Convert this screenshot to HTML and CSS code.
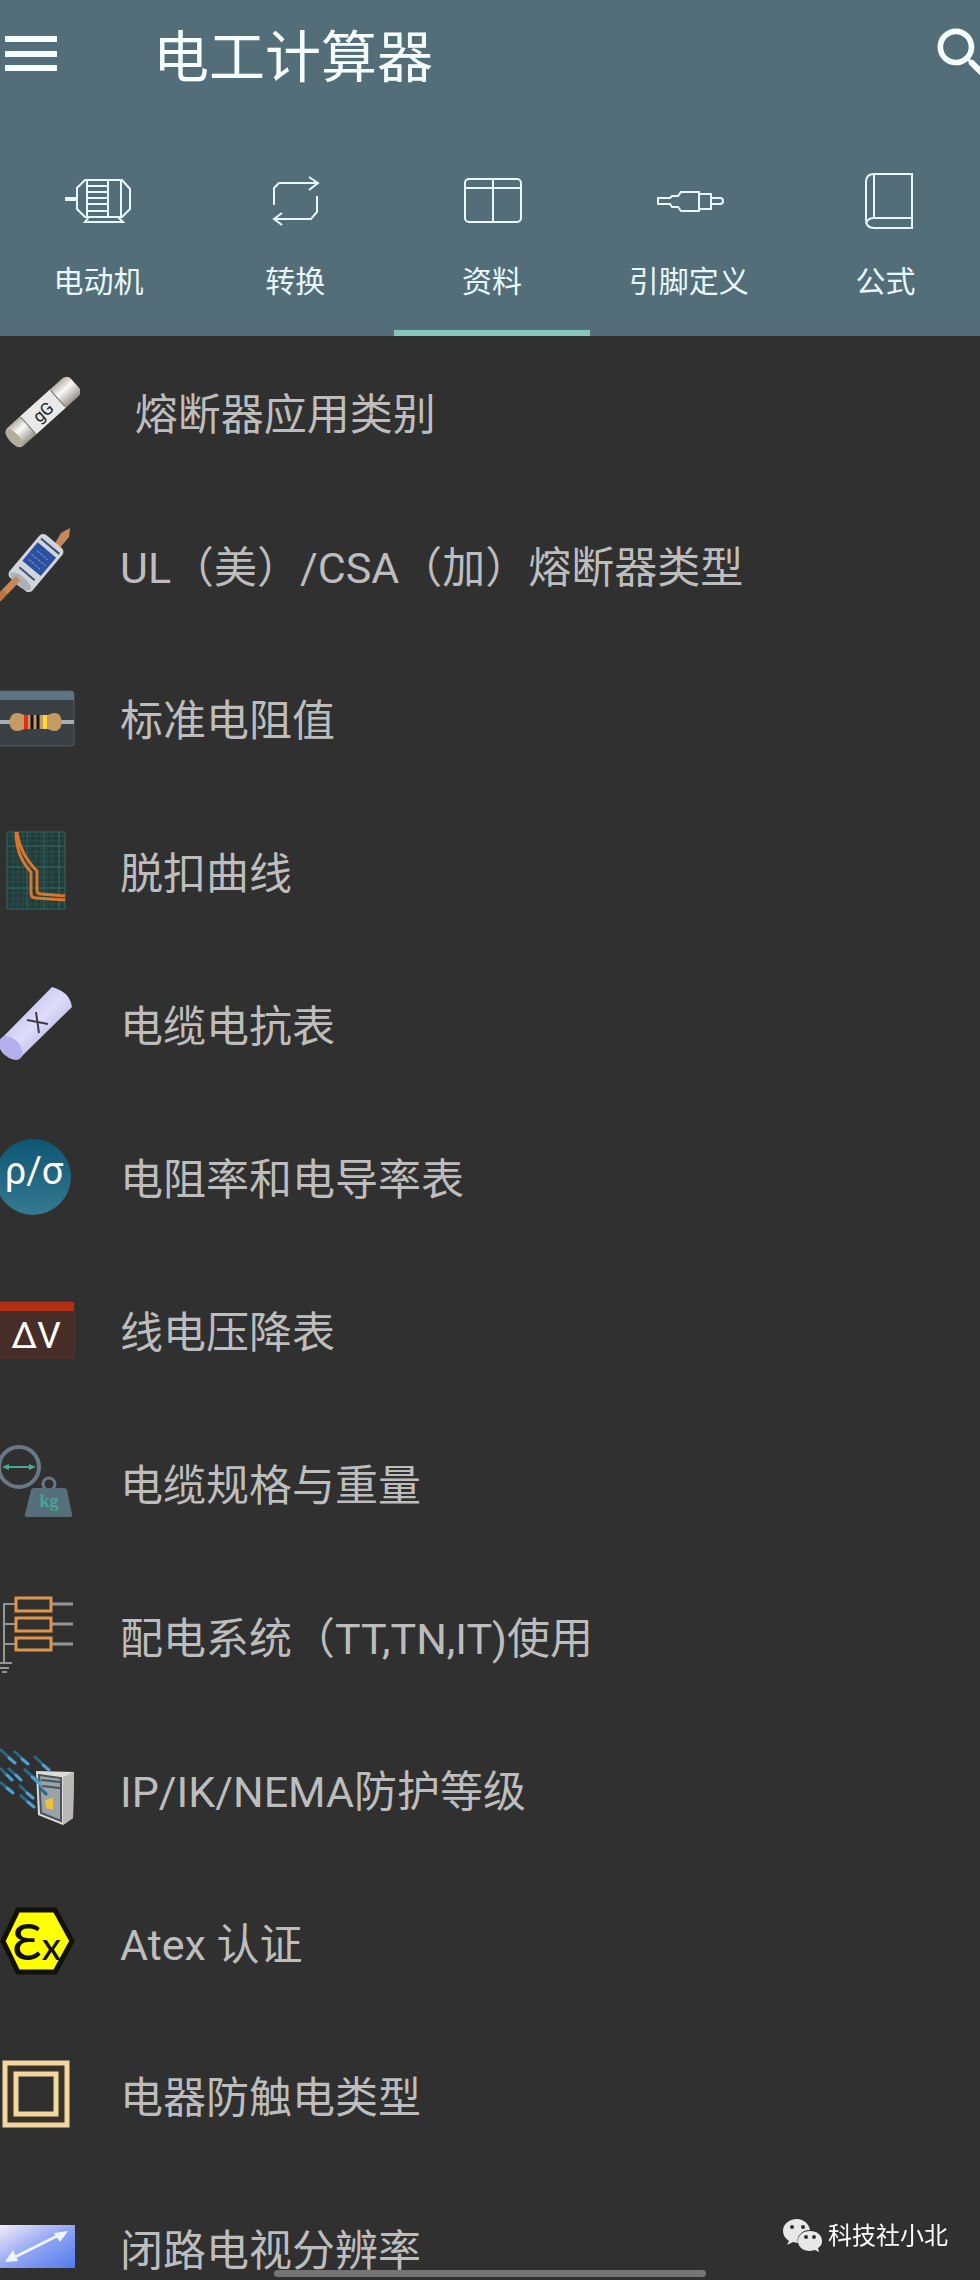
FILE: index.html
```
<!DOCTYPE html>
<html lang="zh-CN">
<head>
  <meta charset="UTF-8" />
  <meta name="viewport" content="width=device-width, initial-scale=1.0"/>
  <title>电工计算器</title>
  <link rel="stylesheet" href="styles.css">
</head>
<body>

<header class="header">
  <div class="topbar">
    <button class="menu-btn" aria-label="菜单">
      <svg width="52" height="36" viewBox="0 0 52 36" fill="currentColor"><path d="M0 0h52v6H0zM0 15h52v6H0zM0 29h52v6H0z"/></svg>
    </button>
    <h1>电工计算器</h1>
    <button class="search-btn" aria-label="搜索">
      <svg width="68" height="68" viewBox="0 0 24 24" fill="currentColor"><path d="M15.5 14h-.79l-.28-.27C15.41 12.59 16 11.11 16 9.5 16 5.91 13.09 3 9.5 3S3 5.91 3 9.5 5.91 16 9.5 16c1.61 0 3.09-.59 4.23-1.57l.27.28v.79l5 4.99L20.49 19l-4.99-5zm-6 0C7.01 14 5 11.99 5 9.5S7.01 5 9.5 5 14 7.01 14 9.5 11.99 14 9.5 14z"/></svg>
    </button>
  </div>
  <nav class="tabs">
    <button class="tab">
      <svg class="tab-icon" viewBox="0 0 72 60"><path d="M3 29h11" stroke-width="4"/><path d="M23 10h37l8 9v20l-8 8H23l-8-8V18zM25 10v37M46 10v37M59 10v37M25 16h21M25 22h21M25 28h21M25 34h21M25 41h21M27 47l-4 5h38l-5-5"/></svg>
      <span>电动机</span>
    </button>
    <button class="tab">
      <svg class="tab-icon" viewBox="0 0 72 60"><path d="M15 35V18l5-5h39M50 7l9 6-9 7M58 26v16l-6 7H15M23 43l-8 6 8 6"/></svg>
      <span>转换</span>
    </button>
    <button class="tab active">
      <svg class="tab-icon" viewBox="0 0 72 60"><rect x="9" y="9" width="56" height="43" rx="4"/><path d="M9 18h56M37 9v43"/></svg>
      <span>资料</span>
    </button>
    <button class="tab">
      <svg class="tab-icon" viewBox="0 0 72 60"><path d="M5 28h12l2-2h6l3-4h18v19H28l-3-4h-6l-2-3H5zM46 24h12v15H46M58 28h9a3 3 0 0 1 0 6h-9"/></svg>
      <span>引脚定义</span>
    </button>
    <button class="tab">
      <svg class="tab-icon" viewBox="0 0 72 60"><path d="M62 48V4H24q-8 0-8 8v38q0 8 8 8h38V48H24q-7 0-8 6M24 4v44"/></svg>
      <span>公式</span>
    </button>
  </nav>
</header>

<main class="list">
  <a class="item" href="#">
    <svg class="icon" viewBox="0 0 80 91">
      <defs><linearGradient id="fuse" x1="0" y1="0" x2="0" y2="1"><stop offset="0" stop-color="#b5b0a8"/><stop offset=".4" stop-color="#fafafa"/><stop offset="1" stop-color="#99948b"/></linearGradient></defs>
      <g transform="translate(43 43) rotate(-42)">
        <rect x="-43" y="-12" width="86" height="24" rx="6" fill="url(#fuse)"/>
        <rect x="-20" y="-12" width="40" height="24" fill="#e9e9e9"/>
        <path d="M-20-11v22M20-11v22" stroke="#77736c"/>
        <ellipse cx="-39" cy="0" rx="5" ry="11" fill="#b3ada0"/>
        <text x="0" y="6" text-anchor="middle" font-size="17" fill="#222">gG</text>
      </g>
    </svg>
    <span>&#8196;熔断器应用类别</span>
  </a>
  <a class="item" href="#">
    <svg class="icon" viewBox="0 0 80 91">
      <path d="M-2 77L20 54" stroke="#b87543" stroke-width="7"/>
      <path d="M54 23l7-12 9-5-1 9-11 13z" fill="#c58a5c"/>
      <g transform="translate(36 41) rotate(-50)">
        <rect x="-28" y="-15" width="56" height="30" rx="5" fill="#d3d5dc"/>
        <ellipse cx="-24" cy="0" rx="5" ry="13" fill="#aeb0b8"/>
        <rect x="-7" y="-12" width="24" height="24" fill="#2b509f"/>
        <path d="M22-12v24M-14-10v20" stroke="#385276" stroke-width="2"/>
        <path d="M-2-8v16M4-9v18M10-7v14" stroke="#7897cb" stroke-dasharray="3 1"/>
      </g>
      <path d="M5 70l13-14" stroke="#c98956" stroke-width="6"/>
    </svg>
    <span>UL（美）/CSA（加）熔断器类型</span>
  </a>
  <a class="item" href="#">
    <svg class="icon" viewBox="0 0 80 91">
      <rect x="-4" y="16" width="78" height="55" rx="3" fill="#3b4044" stroke="#4c5a62"/>
      <path d="M0 16h71q3 0 3 3v6H0z" fill="#5e7482"/>
      <path d="M0 47h74" stroke="#a9adb3" stroke-width="4"/>
      <path d="M17 38q4 0 7 2h24q3-2 7-2c9 0 9 18 0 18q-4 0-7-2H24q-3 2-7 2c-10 0-10-18 0-18z" fill="#c69a63"/>
      <path d="M26 40v14" stroke="#e82d16" stroke-width="4"/>
      <path d="M32 40v14M38 40v14" stroke="#15100c" stroke-width="3"/>
      <path d="M45 40v14" stroke="#fbd936" stroke-width="4"/>
    </svg>
    <span>标准电阻值</span>
  </a>
  <a class="item" href="#">
    <svg class="icon" viewBox="0 0 80 91">
      <rect x="7" y="4" width="58" height="77" fill="#233b3b"/>
      <path d="M7 8h58M7 13h58M7 18h58M7 24h58M7 28h58M7 33h58M7 39h58M7 44h58M7 49h58M7 54h58M7 60h58M7 65h58M7 71h58M7 76h58M13 4v77M18 4v77M23 4v77M30 4v77M36 4v77M41 4v77M47 4v77M52 4v77M59 4v77" stroke="#294f4b"/>
      <path d="M7 4h58v77H7zM7 18h58M7 39h58M7 60h58M27 4v77M44 4v77M59 4v77" fill="none" stroke="#34665f"/>
      <path d="M16 4q0 24 15 40v21q0 5 5 5l29 2M17 4q3 22 20 39v19q0 4 4 4l24 2" fill="none" stroke="#d8762c" stroke-width="3"/>
    </svg>
    <span>脱扣曲线</span>
  </a>
  <a class="item" href="#">
    <svg class="icon" viewBox="0 0 80 91">
      <defs><linearGradient id="tube" x1="0" y1="0" x2="1" y2="1"><stop offset="0" stop-color="#aaa7d8"/><stop offset=".5" stop-color="#dfddfb"/><stop offset="1" stop-color="#9b96ce"/></linearGradient></defs>
      <path d="M52 6q18 5 20 20L22 75q-5 5-11 2Q-3 72 0 59z" fill="url(#tube)"/>
      <ellipse cx="11" cy="67" rx="9" ry="14" transform="rotate(-43 11 67)" fill="#b5b0ec"/>
      <path d="M27 39l21 4M36 31l3 21" stroke="#3d3b48" stroke-width="2"/>
    </svg>
    <span>电缆电抗表</span>
  </a>
  <a class="item" href="#">
    <svg class="icon" viewBox="0 0 80 91">
      <defs><linearGradient id="disc" x1="0" y1="0" x2="0" y2="1"><stop offset="0" stop-color="#0d5672"/><stop offset="1" stop-color="#367992"/></linearGradient></defs>
      <circle cx="33" cy="43" r="38" fill="url(#disc)"/>
      <text x="34" y="50" text-anchor="middle" font-size="38" fill="#fff">ρ/σ</text>
    </svg>
    <span>电阻率和电导率表</span>
  </a>
  <a class="item" href="#">
    <svg class="icon" viewBox="0 0 80 91">
      <rect x="-4" y="15" width="78" height="56" rx="2" fill="#472d28" stroke="#6b2f23"/>
      <path d="M0 15h72q2 0 2 2v7H0z" fill="#b12f13"/>
      <text x="36" y="61" text-anchor="middle" font-size="37" fill="#fff">ΔV</text>
    </svg>
    <span>线电压降表</span>
  </a>
  <a class="item" href="#">
    <svg class="icon" viewBox="0 0 80 91">
      <circle cx="19" cy="27" r="20" fill="none" stroke="#697984" stroke-width="4"/>
      <path d="M5 27h28" stroke="#4aa892" stroke-width="2"/>
      <path d="M2 27l7-3v6zM36 27l-7-3v6z" fill="#4aa892"/>
      <circle cx="49" cy="44" r="6" fill="none" stroke="#647985" stroke-width="3"/>
      <path d="M34 48h30q2 0 3 2l5 24q1 3-2 3H27q-3 0-2-3l6-24q1-2 3-2z" fill="#566f7b"/>
      <text class="kg" x="49" y="67" text-anchor="middle" font-size="18" font-weight="700" fill="#45a596">kg</text>
    </svg>
    <span>电缆规格与重量</span>
  </a>
  <a class="item" href="#">
    <svg class="icon" viewBox="0 0 80 91">
      <path d="M15 11H4v58M4 31h11M4 51h11M-4 70h16M-1 75h10M2 79h5" fill="none" stroke="#969696" stroke-width="2"/>
      <path d="M52 11h21M52 31h21M52 51h21" stroke="#969696" stroke-width="3"/>
      <path d="M16 5h35v13H16zM16 25h35v13H16zM16 45h35v12H16z" fill="#30302f" stroke="#e0954c" stroke-width="3"/>
    </svg>
    <span>配电系统（TT,TN,IT)使用</span>
  </a>
  <a class="item" href="#">
    <svg class="icon" viewBox="0 0 80 91">
      <path d="M36 25l38 1-1 46-10 7-25-10z" fill="#dcdcd9"/>
      <path d="M63 31l11-5-1 46-10 7z" fill="#b9b8b4"/>
      <path d="M39 29l22 3v43l-20-8z" fill="#9aa2a8" stroke="#4a535b" stroke-width="2"/>
      <path d="M41 34l19 2M42 40l18 2" stroke="#46535d" stroke-width="2"/>
      <path d="M45 54l8-2v12l-7-2z" fill="#ebc33b"/>
      <path d="M0 3l15 14M14 5l14 13M34 10l15 14M0 22l12 12M8 22l13 12M24 23l15 13M0 36l12 10M19 39l14 13M20 49l14 12M40 42l7 7" stroke="#296887" stroke-width="3"/>
      <path d="M9 12l6 5M22 13l6 5M43 19l6 5M7 29l5 5M16 29l5 5M32 31l8 7M7 42l6 5M27 47l6 5M28 56l6 5" stroke="#4f9fd2" stroke-width="3" stroke-linecap="round"/>
    </svg>
    <span>IP/IK/NEMA防护等级</span>
  </a>
  <a class="item" href="#">
    <svg class="icon" viewBox="0 0 80 91">
      <path d="M18 11h37l17 31-17 31H18L3 42z" fill="#ff0" stroke="#111107" stroke-width="5"/>
      <text class="ex" x="12" y="61" font-size="50" font-weight="500" fill="#111107">Ɛ<tspan font-size="38">x</tspan></text>
    </svg>
    <span>Atex 认证</span>
  </a>
  <a class="item" href="#">
    <svg class="icon" viewBox="0 0 80 91">
      <rect x="5" y="11" width="62" height="62" fill="#3a3128" stroke="#f3d7a0" stroke-width="5"/>
      <rect x="16" y="22" width="40" height="40" fill="#303030" stroke="#f3d7a0" stroke-width="5"/>
    </svg>
    <span>电器防触电类型</span>
  </a>
  <a class="item" href="#">
    <svg class="icon" viewBox="0 0 80 91">
      <defs><linearGradient id="cctv" x1="0" y1="0" x2="1" y2="1"><stop offset="0" stop-color="#f4edfb"/><stop offset=".5" stop-color="#91a5f2"/><stop offset="1" stop-color="#527bf0"/></linearGradient></defs>
      <rect x="0" y="20" width="75" height="43" fill="url(#cctv)"/>
      <path d="M13 53l48-24" stroke="#eef5ff" stroke-width="3"/>
      <path d="M5 57l8-12 5 11zM68 26l-14 2 6 9z" fill="#eef5ff"/>
    </svg>
    <span>闭路电视分辨率</span>
  </a>
</main>

<div class="watermark">
  <svg width="40" height="34" viewBox="0 0 40 34">
    <path d="M14 0C6 0 0 5 0 12c0 4 2 7 6 10l-2 4 6-3 5 1C13 17 19 11 27 11 26 5 21 0 14 0z" fill="#e8e8e8"/>
    <path d="M27 12c-7 0-12 4-12 10s5 10 12 10l5-1 4 2-1-4c3-2 4-4 4-7 0-6-5-10-12-10z" fill="#e8e8e8"/>
    <g fill="#303030"><circle cx="9" cy="8" r="2"/><circle cx="20" cy="8" r="2"/><circle cx="23" cy="18" r="2"/><circle cx="31" cy="18" r="2"/></g>
  </svg>
  <span>科技社小北</span>
</div>
<div class="home-bar"></div>

</body>
</html>
```
FILE: styles.css
```
* { box-sizing: border-box; }
body { margin: 0; height: 100vh; display: flex; flex-direction: column; overflow: hidden; background: #303030; font-family: Roboto, "Noto Sans CJK SC", sans-serif; }
button { background: none; border: none; padding: 0; margin: 0; color: inherit; font: inherit; cursor: pointer; }
svg { display: block; flex: none; }

.header { background: #546e79; color: #f5ffff; flex: none; }
.topbar { display: flex; align-items: center; height: 108px; padding-left: 5px; overflow: hidden; }
.topbar h1 { flex: 1; margin: 0 0 0 96px; font-size: 56px; line-height: 80px; font-weight: 400; padding-top: 8px; }
.search-btn { margin-right: -17px; }

.tabs { display: grid; grid-template-columns: repeat(5, 1fr); height: 228px; margin-right: -4px; }
.tab { display: flex; flex-direction: column; align-items: center; padding-top: 62px; border-bottom: 6px solid transparent; color: #e8f8ff; font-size: 30px; line-height: 44px; }
.tab.active { border-bottom-color: #8ac6c0; }
.tab-icon { width: 72px; height: 60px; margin-bottom: 30px; fill: none; stroke: currentColor; stroke-width: 2; }

.list { flex: 1; min-height: 0; overflow: hidden; padding-top: 2px; }
.item { display: flex; align-items: center; gap: 40px; height: 153px; color: #bdbdbd; font-size: 43px; line-height: 64px; text-decoration: none; white-space: nowrap; }
.icon { width: 80px; height: 91px; }
.icon .kg { font-family: "Liberation Serif", serif; }
.icon .ex { font-family: Lato, "Noto Sans", sans-serif; }

.watermark { position: fixed; right: 32px; bottom: 26px; display: flex; align-items: center; gap: 5px; color: #fff; font-size: 24px; line-height: 36px; }
.home-bar { position: fixed; left: 28%; right: 28%; bottom: 3px; height: 7px; border-radius: 4px; background: #757575; }
```
